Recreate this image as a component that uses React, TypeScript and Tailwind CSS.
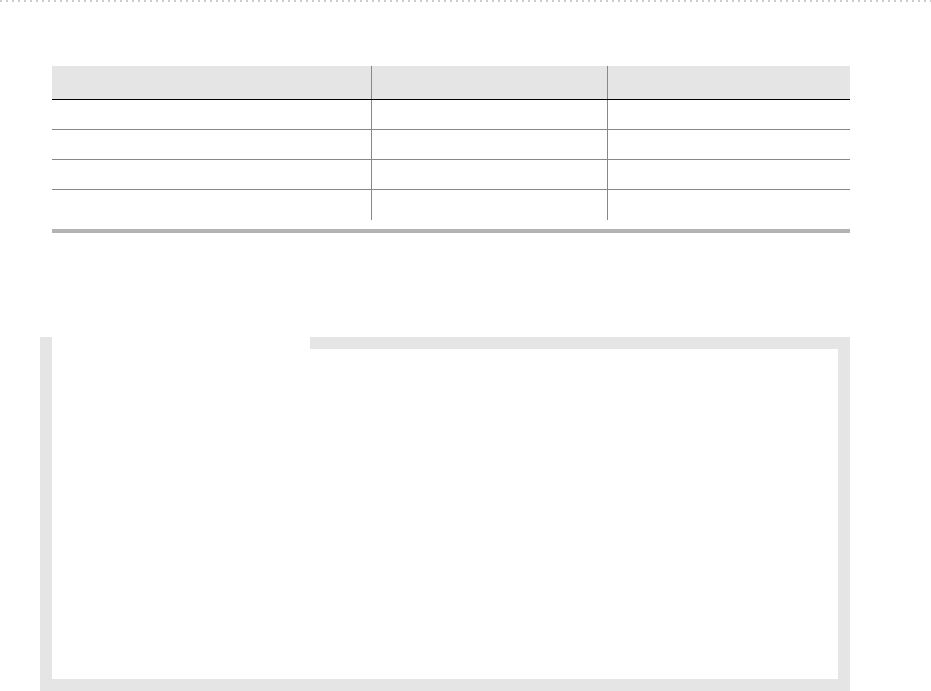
export default function App() {
  const rows = [0, 1, 2, 3];
  return (
    <div className="min-h-screen bg-white font-['Liberation_Sans',sans-serif]">
      {/* dotted top rule */}
      <div className="h-[2px] w-full bg-[repeating-linear-gradient(90deg,#cccccc_0_2px,transparent_2px_6px)]" />

      {/* Table */}
      <div className="pl-[52px] pt-[64px]">
        <div className="w-[798px]">
          <div className="grid h-[34px] grid-cols-[319px_236px_243px] border-b border-black bg-[#e5e5e5]">
            <div />
            <div className="border-l border-[#888888]" />
            <div className="border-l border-[#888888]" />
          </div>
          {rows.map((r) => (
            <div
              key={r}
              className={`grid h-[30px] grid-cols-[319px_236px_243px] ${
                r < rows.length - 1 ? "border-b border-[#888888]" : ""
              }`}
            >
              <div />
              <div className="border-l border-[#888888]" />
              <div className="border-l border-[#888888]" />
            </div>
          ))}
          <div className="mt-[9px] h-[4px] bg-[#b3b3b3]" />
        </div>
      </div>

      {/* Tabbed panel */}
      <div className="ml-[40px] mt-[104px] flex h-[354px] w-[810px] flex-col border-x-[12px] border-b-[12px] border-[#e5e5e5]">
        <div className="flex h-[12px]">
          <div className="w-[258px] bg-white" />
          <div className="flex-1 bg-[#e5e5e5]" />
        </div>
        <div className="flex-1 bg-white" />
      </div>
    </div>
  );
}
